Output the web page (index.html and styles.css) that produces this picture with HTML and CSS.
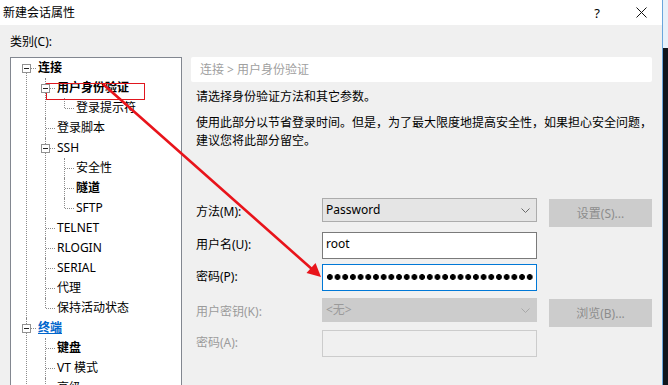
FILE: index.html
```html
<!DOCTYPE html>
<html lang="zh-CN">
<head>
<meta charset="utf-8">
<title>新建会话属性</title>
<link rel="stylesheet" href="styles.css">
</head>
<body>
<div class="screen">
  <div class="dialog">
    <header class="titlebar">
      <span class="title">新建会话属性</span>
      <span class="tb-btn help">?</span>
      <span class="tb-btn close"><svg width="11" height="11" viewBox="0 0 11 11"><path d="M0.5 0.5L10.5 10.5M10.5 0.5L0.5 10.5" stroke="#111" stroke-width="1" fill="none"/></svg></span>
    </header>
    <div class="content">
      <div class="cat-label">类别(C):</div>
      <div class="columns">
        <nav class="tree">
          <ul class="tree-list root">
            <li class="first">
              <div class="row"><span class="exp"></span><span class="lbl bold">连接</span></div>
              <ul class="tree-list">
                <li>
                  <div class="row"><span class="exp"></span><span class="lbl bold">用户身份验证</span></div>
                  <ul class="tree-list">
                    <li><div class="row"><span class="lbl">登录提示符</span></div></li>
                  </ul>
                </li>
                <li><div class="row"><span class="lbl">登录脚本</span></div></li>
                <li>
                  <div class="row"><span class="exp"></span><span class="lbl">SSH</span></div>
                  <ul class="tree-list">
                    <li><div class="row"><span class="lbl">安全性</span></div></li>
                    <li><div class="row"><span class="lbl bold">隧道</span></div></li>
                    <li><div class="row"><span class="lbl">SFTP</span></div></li>
                  </ul>
                </li>
                <li><div class="row"><span class="lbl">TELNET</span></div></li>
                <li><div class="row"><span class="lbl">RLOGIN</span></div></li>
                <li><div class="row"><span class="lbl">SERIAL</span></div></li>
                <li><div class="row"><span class="lbl">代理</span></div></li>
                <li><div class="row"><span class="lbl">保持活动状态</span></div></li>
              </ul>
            </li>
            <li>
              <div class="row"><span class="exp"></span><span class="lbl link">终端</span></div>
              <ul class="tree-list">
                <li><div class="row"><span class="lbl bold">键盘</span></div></li>
                <li><div class="row"><span class="lbl">VT 模式</span></div></li>
                <li><div class="row"><span class="lbl">高级</span></div></li>
              </ul>
            </li>
            <li>
              <div class="row"><span class="exp"></span><span class="lbl bold">外观</span></div>
              <ul class="tree-list">
                <li><div class="row"><span class="lbl">窗口</span></div></li>
                <li><div class="row"><span class="lbl">突出</span></div></li>
              </ul>
            </li>
          </ul>
        </nav>
        <main class="panel">
          <div class="crumb">连接 &gt; 用户身份验证</div>
          <p class="intro">请选择身份验证方法和其它参数。</p>
          <p class="desc">使用此部分以节省登录时间。但是，为了最大限度地提高安全性，如果担心安全问题，<br>建议您将此部分留空。</p>
          <div class="form">
            <label class="flabel sel-row">方法(M):</label>
            <div class="select">
              <span class="sel-text">Password</span>
              <svg class="chev" width="9" height="5" viewBox="0 0 9 5"><path d="M0.5 0.5L4.5 4.5L8.5 0.5" stroke="#6a6a6a" stroke-width="1" fill="none"/></svg>
            </div>
            <button class="btn" disabled>设置(S)...</button>

            <label class="flabel in-row">用户名(U):</label>
            <div class="input"><span class="in-text">root</span></div>
            <span class="cell"></span>

            <label class="flabel in-row">密码(P):</label>
            <div class="input focus"><div class="dots"></div></div>
            <span class="cell"></span>

            <label class="flabel sel-row disabled">用户密钥(K):</label>
            <div class="select off">
              <span class="sel-text">&lt;无&gt;</span>
              <svg class="chev" width="9" height="5" viewBox="0 0 9 5"><path d="M0.5 0.5L4.5 4.5L8.5 0.5" stroke="#a8a8a8" stroke-width="1" fill="none"/></svg>
            </div>
            <button class="btn" disabled>浏览(B)...</button>

            <label class="flabel in-row disabled">密码(A):</label>
            <div class="input off"></div>
            <span class="cell"></span>
          </div>
        </main>
      </div>
    </div>
  </div>
  <div class="edge"><div class="edge-top"></div><div class="edge-bottom"></div></div>
  <svg class="annot" width="668" height="385" viewBox="0 0 668 385">
    <rect x="46.5" y="83.5" width="98" height="16" fill="none" stroke="#e0161e" stroke-width="1"/>
    <line x1="104" y1="85" x2="313" y2="270" stroke="#e8141b" stroke-width="2.6" stroke-linecap="round"/>
    <polygon points="321,277 306.5,273 315.5,263" fill="#e8141b"/>
  </svg>
</div>
</body>
</html>
```

FILE: styles.css
```css
html, body {
  margin: 0;
  padding: 0;
}
body {
  width: 668px;
  height: 385px;
  overflow: hidden;
  font-family: "Noto Sans", "Noto Sans CJK SC", sans-serif;
  font-size: 12px;
  color: #000;
  background: #f0f0f0;
}
.screen {
  position: relative;
  display: flex;
  width: 668px;
  height: 385px;
}
.dialog {
  width: 662px;
  flex: none;
  background: #f0f0f0;
  display: flex;
  flex-direction: column;
}
.titlebar {
  height: 25px;
  background: #fff;
  display: flex;
  align-items: center;
}
.title {
  flex: 1;
  padding-left: 3px;
  line-height: 18px;
}
.tb-btn {
  display: flex;
  align-items: center;
  justify-content: center;
  height: 25px;
}
.help {
  width: 46px;
  font-size: 13px;
}
.close {
  width: 42px;
}
.content {
  padding: 8px 0 0 10px;
}
.cat-label {
  line-height: 18px;
  margin-bottom: 6px;
}
.columns {
  display: flex;
  align-items: flex-start;
}

/* tree */
.tree {
  width: 172px;
  height: 360px;
  box-sizing: border-box;
  border: 1px solid #828790;
  background: #fff;
  overflow: hidden;
  flex: none;
}
.tree-list {
  list-style: none;
  margin: 0;
  padding: 0;
}
.tree-list .tree-list {
  margin-left: 19px;
}
.tree-list li {
  position: relative;
}
.tree-list li::before {
  content: "";
  position: absolute;
  left: 15px;
  top: 0;
  bottom: 0;
  border-left: 1px dotted #8c8c8c;
}
.tree-list li:last-child::before {
  bottom: auto;
  height: 10px;
}
.root > li.first::before {
  top: 10px;
}
.row {
  position: relative;
  height: 20px;
  line-height: 20px;
  padding-left: 27px;
  white-space: nowrap;
}
.row::before {
  content: "";
  position: absolute;
  left: 16px;
  top: 10px;
  width: 9px;
  border-top: 1px dotted #8c8c8c;
}
.exp {
  position: absolute;
  left: 11px;
  top: 6px;
  width: 9px;
  height: 9px;
  box-sizing: border-box;
  border: 1px solid #919191;
  background: #fff;
  z-index: 1;
}
.exp::after {
  content: "";
  position: absolute;
  left: 1px;
  top: 3px;
  width: 5px;
  height: 1px;
  background: #222;
}
.lbl {
  color: #000;
}
.bold {
  font-weight: 700;
}
.link {
  font-weight: 700;
  color: #0066cc;
  text-decoration: underline;
}

/* panel */
.panel {
  width: 461px;
  margin-left: 9px;
  flex: none;
}
.crumb {
  height: 25px;
  line-height: 25px;
  background: #fff;
  border-radius: 2px;
  padding-left: 9px;
  color: #a0a0a0;
}
.intro {
  margin: 6px 0 0;
  padding-left: 5px;
  line-height: 18px;
}
.desc {
  margin: 8px 0 0;
  padding-left: 5px;
  line-height: 18px;
  white-space: nowrap;
}
.form {
  margin-top: 48px;
  padding-left: 5px;
  display: grid;
  grid-template-columns: 114px 215px 103px;
  grid-template-rows: 34px 32px 34px 32px 27px;
  column-gap: 12px;
  align-items: start;
}
.flabel {
  line-height: 18px;
}
.flabel.sel-row {
  margin-top: 5px;
}
.flabel.in-row {
  margin-top: 4px;
}
.flabel.disabled {
  color: #9b9b9b;
}
.select {
  height: 24px;
  box-sizing: border-box;
  border: 1px solid #acacac;
  background: #e5e5e5;
  display: flex;
  align-items: center;
  justify-content: space-between;
  padding: 0 6px 0 3px;
}
.select.off {
  border-color: #cccccc;
  background: #cccccc;
  color: #9a9a9a;
}
.sel-text {
  line-height: 18px;
}
.input {
  height: 27px;
  box-sizing: border-box;
  border: 1px solid #7a7a7a;
  background: #fff;
  padding: 2px 3px 0;
}
.input.focus {
  border-color: #0078d7;
  padding: 0 3px;
  display: flex;
  align-items: center;
}
.input.off {
  border-color: #cccccc;
  background: #f0f0f0;
}
.in-text {
  line-height: 18px;
}
.dots {
  width: 208px;
  height: 8px;
  margin-top: -1px;
  background: radial-gradient(circle at center, #000 0, #000 2.6px, rgba(0,0,0,0) 3.2px) 0 0 / 7.7px 8px repeat-x;
}
.btn {
  margin-top: 1px;
  height: 28px;
  box-sizing: border-box;
  border: 1px solid #cccccc;
  background: #cccccc;
  color: #8c8c8c;
  font: inherit;
  padding: 0;
}

/* right window edge */
.edge {
  flex: 1;
  display: flex;
  flex-direction: column;
  border-left: 1px solid #6aa6dc;
}
.edge-top {
  height: 48px;
  background: #e8f1fa;
}
.edge-bottom {
  flex: 1;
  background: #10151c;
}

/* red annotation overlay */
.annot {
  position: absolute;
  left: 0;
  top: 0;
  pointer-events: none;
}
```
